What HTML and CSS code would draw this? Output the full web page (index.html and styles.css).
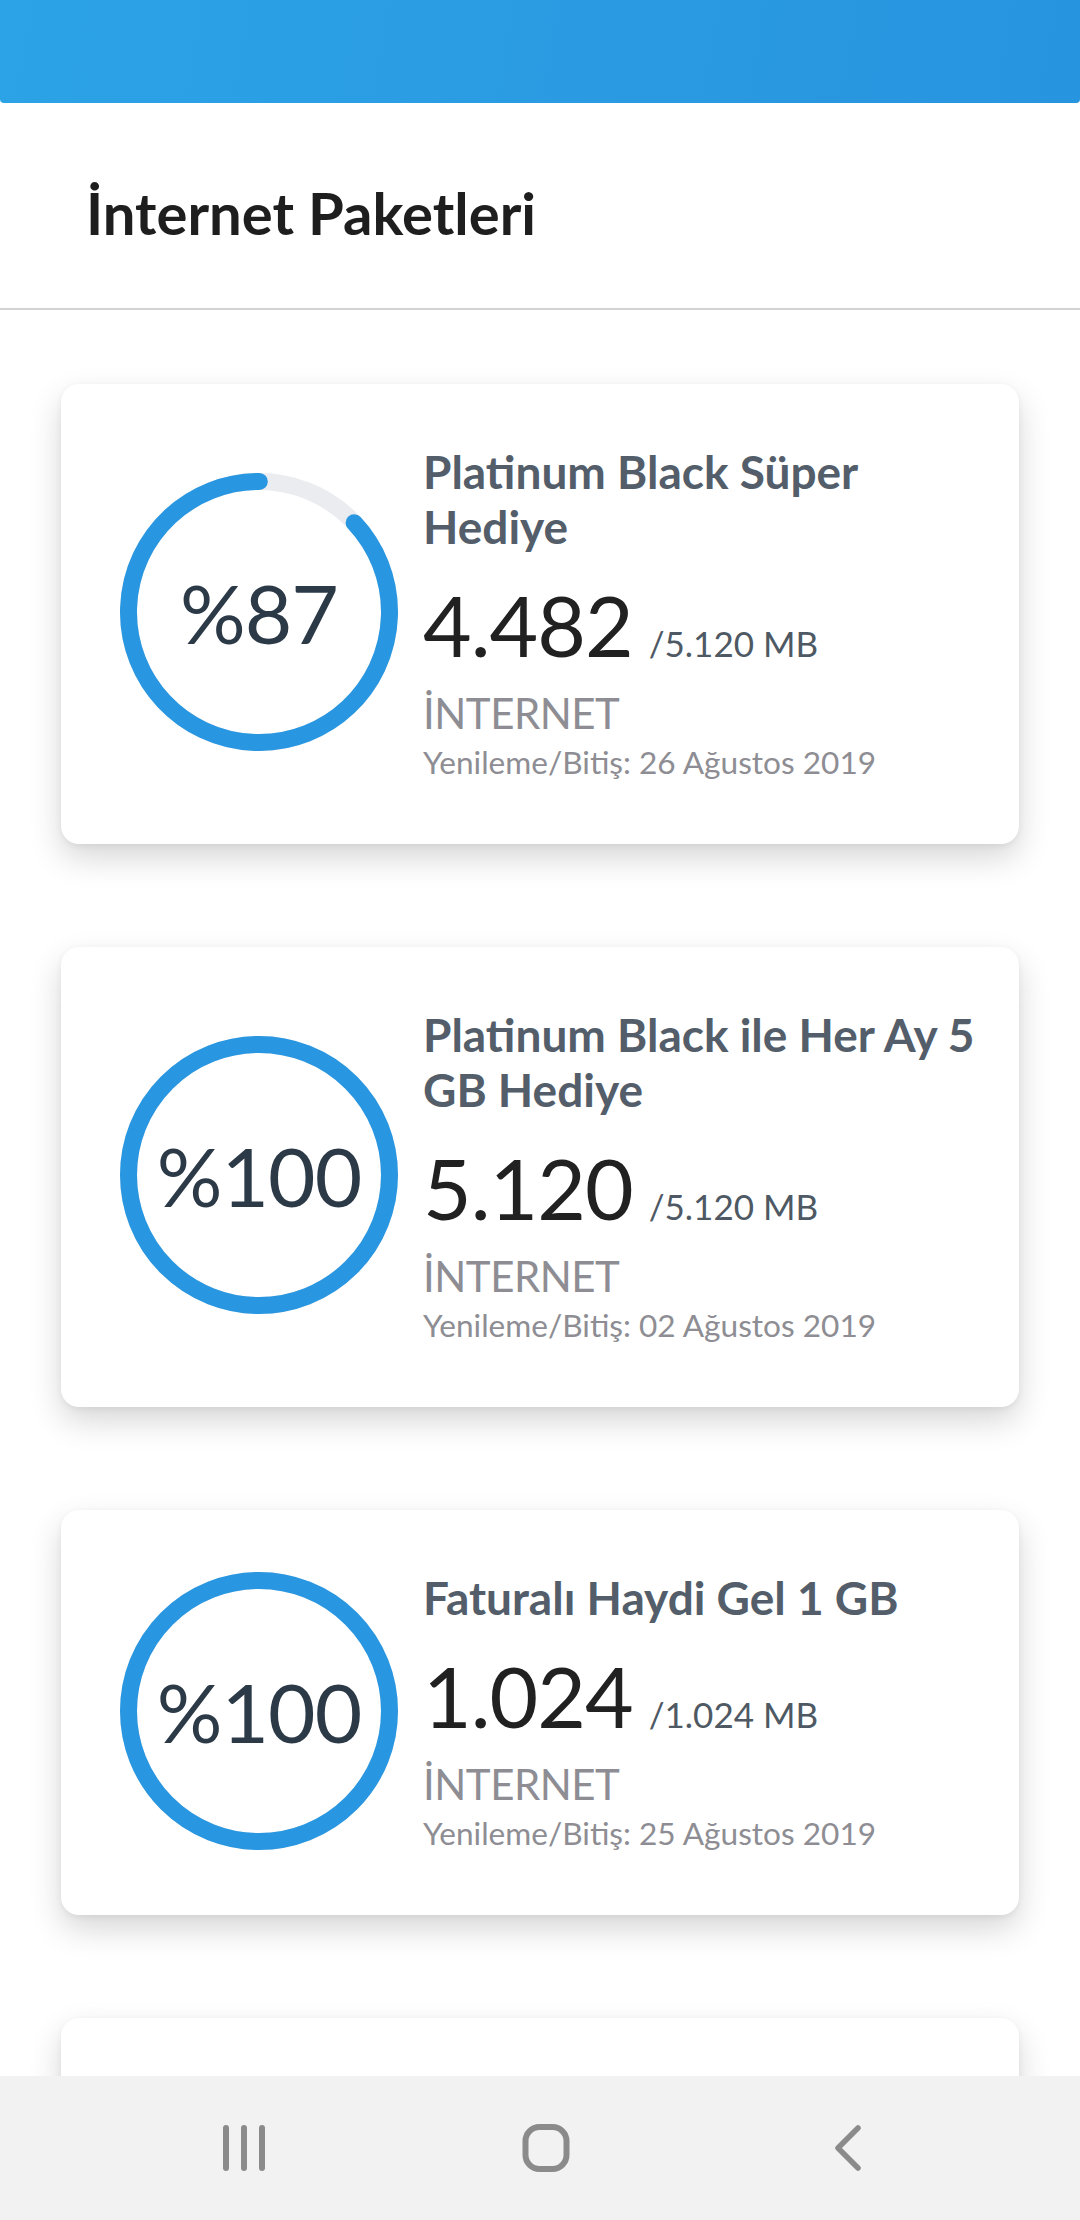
FILE: index.html
```html
<!DOCTYPE html>
<html lang="tr">
<head>
<meta charset="utf-8">
<title>İnternet Paketleri</title>
<link rel="stylesheet" href="styles.css">
</head>
<body>
<div class="screen">
  <header class="topbar"></header>
  <section class="page-title">
    <h1>İnternet Paketleri</h1>
  </section>
  <main class="list">
    <div class="item">
      <article class="card">
        <div class="ring">
          <svg class="ring-svg" viewBox="0 0 278 278" width="278" height="278">
            <circle class="track" cx="139" cy="139" r="130.5"/>
            <circle class="bar" cx="139" cy="139" r="130.5" stroke-dasharray="713.4 1000" transform="rotate(-43.2 139 139)"/>
          </svg>
          <span class="pct">%87</span>
        </div>
        <div class="info">
          <h2 class="name">Platinum Black Süper Hediye</h2>
          <div class="amount"><span class="used">4.482</span><span class="total">/5.120 MB</span></div>
          <div class="kind">İNTERNET</div>
          <div class="date">Yenileme/Bitiş: 26 Ağustos 2019</div>
        </div>
      </article>
    </div>
    <div class="item">
      <article class="card">
        <div class="ring">
          <svg class="ring-svg" viewBox="0 0 278 278" width="278" height="278">
            <circle class="track" cx="139" cy="139" r="130.5"/>
            <circle class="bar" cx="139" cy="139" r="130.5"/>
          </svg>
          <span class="pct">%100</span>
        </div>
        <div class="info">
          <h2 class="name">Platinum Black ile Her Ay 5 GB Hediye</h2>
          <div class="amount"><span class="used">5.120</span><span class="total">/5.120 MB</span></div>
          <div class="kind">İNTERNET</div>
          <div class="date">Yenileme/Bitiş: 02 Ağustos 2019</div>
        </div>
      </article>
    </div>
    <div class="item">
      <article class="card">
        <div class="ring">
          <svg class="ring-svg" viewBox="0 0 278 278" width="278" height="278">
            <circle class="track" cx="139" cy="139" r="130.5"/>
            <circle class="bar" cx="139" cy="139" r="130.5"/>
          </svg>
          <span class="pct">%100</span>
        </div>
        <div class="info">
          <h2 class="name">Faturalı Haydi Gel 1 GB</h2>
          <div class="amount"><span class="used">1.024</span><span class="total">/1.024 MB</span></div>
          <div class="kind">İNTERNET</div>
          <div class="date">Yenileme/Bitiş: 25 Ağustos 2019</div>
        </div>
      </article>
    </div>
    <div class="item">
      <article class="card card-empty"></article>
    </div>
  </main>
  <nav class="navbar">
    <svg class="nav-icon" viewBox="0 0 60 60" width="60" height="60">
      <line x1="12" y1="10" x2="12" y2="50"/>
      <line x1="30" y1="10" x2="30" y2="50"/>
      <line x1="48" y1="10" x2="48" y2="50"/>
    </svg>
    <svg class="nav-icon" viewBox="0 0 60 60" width="60" height="60">
      <rect x="9.5" y="9" width="41" height="42" rx="14" ry="14"/>
    </svg>
    <svg class="nav-icon" viewBox="0 0 60 60" width="60" height="60">
      <polyline points="40,10 20,30 40,50"/>
    </svg>
  </nav>
</div>
</body>
</html>
```

FILE: styles.css
```css
* { box-sizing: border-box; }

html, body {
  margin: 0;
  padding: 0;
  background: #ffffff;
}

body {
  font-family: "Lato", "Noto Sans", "Liberation Sans", sans-serif;
}

.screen {
  width: 1080px;
  height: 2220px;
  display: flex;
  flex-direction: column;
  overflow: hidden;
}

.topbar {
  flex: 0 0 103px;
  background: linear-gradient(100deg, #2ca3e6 0%, #2a9be2 55%, #2794df 100%);
  border-radius: 0 0 4px 4px;
}

.page-title {
  flex: 0 0 207px;
  padding: 75px 0 0 86px;
  border-bottom: 2px solid #d2d2d2;
}

.page-title h1 {
  margin: 0;
  font-size: 58px;
  line-height: 70px;
  font-weight: 700;
  color: #1e1e1e;
  letter-spacing: 0;
}

.list {
  flex: 1 1 auto;
  overflow: hidden;
  padding-top: 19px;
}

.item {
  padding: 55px 61px 48px;
  overflow: hidden;
}

.card {
  display: flex;
  align-items: center;
  background: #ffffff;
  border-radius: 18px;
  padding: 60px 36px 64px 59px;
  box-shadow: 0 14px 32px rgba(0, 0, 0, 0.16), 0 2px 6px rgba(0, 0, 0, 0.06);
}

.card-empty {
  min-height: 400px;
}

.ring {
  flex: 0 0 278px;
  display: grid;
  place-items: center;
  width: 278px;
  height: 278px;
}

.ring-svg, .pct {
  grid-area: 1 / 1;
}

.track {
  fill: none;
  stroke: #eaecef;
  stroke-width: 17;
}

.bar {
  fill: none;
  stroke: #2896e0;
  stroke-width: 17;
  stroke-linecap: round;
}

.pct {
  font-size: 82px;
  font-weight: 400;
  color: #2c3a48;
  line-height: 1;
  letter-spacing: -1px;
}

.info {
  margin-left: 25px;
  flex: 1 1 auto;
  min-width: 0;
}

.name {
  margin: 0;
  font-size: 46px;
  line-height: 55px;
  font-weight: 700;
  color: #535e6a;
}

.amount {
  display: flex;
  align-items: baseline;
  margin-top: 21px;
  height: 100px;
}

.used {
  font-size: 84px;
  line-height: 100px;
  color: #212121;
  font-weight: 400;
  letter-spacing: -1px;
}

.total {
  margin-left: 16px;
  font-size: 35px;
  line-height: 1;
  color: #4e5964;
}

.kind {
  margin-top: 13px;
  font-size: 42px;
  line-height: 50px;
  color: #8d8d93;
  letter-spacing: -0.5px;
}

.date {
  margin-top: 6px;
  font-size: 31.6px;
  line-height: 36px;
  color: #8d8d93;
}

.navbar {
  flex: 0 0 144px;
  background: #f2f2f2;
  display: flex;
  justify-content: center;
  align-items: center;
  gap: 242px;
  padding-left: 12px;
}

.nav-icon line,
.nav-icon rect,
.nav-icon polyline {
  fill: none;
  stroke: #8b8b8b;
  stroke-width: 6;
  stroke-linecap: round;
  stroke-linejoin: round;
}

.nav-icon polyline {
  stroke-width: 5.5;
}
```
